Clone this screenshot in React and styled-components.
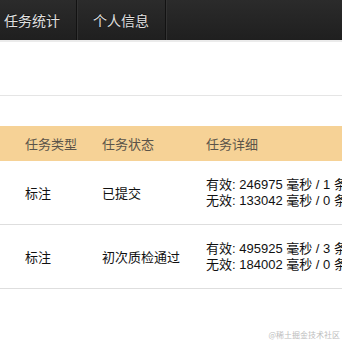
import React from "react";
import styled, { createGlobalStyle } from "styled-components";

const Global = createGlobalStyle`
  html, body { margin: 0; padding: 0; background: #fff; }
  body { font-family: "Liberation Sans", Arial, "Noto Sans CJK SC", sans-serif; overflow: hidden; }
`;

const Page = styled.div`
  width: 342px;
  height: 342px;
  position: relative;
  overflow: hidden;
`;

const NavBar = styled.div`
  height: 40px;
  background: linear-gradient(#2b2b2b, #1f1f1f);
  display: flex;
  border-bottom: 2px solid #ebebeb;
`;

const NavList = styled.div`
  display: flex;
  margin-left: -12px;
`;

const NavItem = styled.div`
  padding: 0 16px;
  display: flex;
  align-items: center;
  color: #e0e0e0;
  font-size: 14px;
  text-shadow: 0 -1px 0 rgba(0, 0, 0, 0.6);
  border-right: 1px solid #121212;
  box-shadow: 1px 0 0 #333;
`;

const Toolbar = styled.div`
  height: 53px;
  border-bottom: 1px solid #e5e5e5;
`;

const Table = styled.table`
  margin-top: 30px;
  border-collapse: collapse;
  width: 480px;
  table-layout: fixed;
  font-size: 13px;
`;

const HeadCell = styled.th`
  background: #f6d296;
  color: #5b5449;
  font-weight: normal;
  text-align: left;
  height: 35px;
  padding: 0 0 0 ${(p) => p.$pl}px;
  width: ${(p) => p.$w}px;
`;

const Row = styled.tr`
  border-bottom: 1px solid #dedede;
`;

const Cell = styled.td`
  height: 62px;
  padding: 0 0 1px ${(p) => p.$pl}px;
  color: #111;
  vertical-align: middle;
`;

const Detail = styled.div`
  line-height: 14px;
  white-space: nowrap;
  padding-top: 2px;
`;

const Watermark = styled.div`
  position: absolute;
  right: 2px;
  bottom: 2px;
  font-size: 8px;
  color: #bdbdbd;
  font-family: "Noto Sans CJK SC", sans-serif;
`;

const rows = [
  { type: "标注", status: "已提交", valid: "246975 毫秒 / 1 条", invalid: "133042 毫秒 / 0 条" },
  { type: "标注", status: "初次质检通过", valid: "495925 毫秒 / 3 条", invalid: "184002 毫秒 / 0 条" },
];

export default function App() {
  return (
    <Page>
      <Global />
      <NavBar>
        <NavList>
          <NavItem>任务统计</NavItem>
          <NavItem>个人信息</NavItem>
        </NavList>
      </NavBar>
      <Toolbar />
      <Table>
        <thead>
          <tr>
            <HeadCell $pl={25} $w={77}>任务类型</HeadCell>
            <HeadCell $pl={0} $w={104}>任务状态</HeadCell>
            <HeadCell $pl={0}>任务详细</HeadCell>
          </tr>
        </thead>
        <tbody>
          {rows.map((r, i) => (
            <Row key={i}>
              <Cell $pl={25}>{r.type}</Cell>
              <Cell $pl={0}>{r.status}</Cell>
              <Cell $pl={0}>
                <Detail>有效: {r.valid}</Detail>
                <Detail>无效: {r.invalid}</Detail>
              </Cell>
            </Row>
          ))}
        </tbody>
      </Table>
      <Watermark>@稀土掘金技术社区</Watermark>
    </Page>
  );
}
